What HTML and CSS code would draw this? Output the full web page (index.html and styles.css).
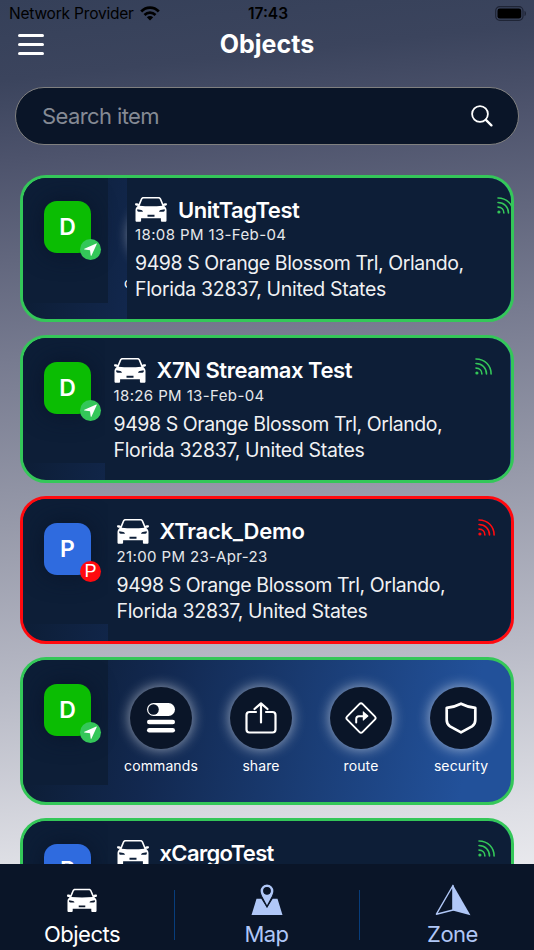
FILE: index.html
```html
<!DOCTYPE html>
<html lang="en">
<head>
    <meta charset="UTF-8">
    <meta name="viewport" content="width=device-width, initial-scale=1.0">
    <title>Objects</title>
    <link rel="stylesheet" href="styles.css">
</head>
<body>
    <svg class="sprite" width="0" height="0">
        <symbol id="car" viewBox="0 0 32 25">
            <path fill="currentColor" fill-rule="evenodd" d="M8.5 0h15c1.2 0 2.2.6 2.7 1.7L28.4 7c.3-.6.8-.8 1.5-.8h1.2c.6 0 .9.4.9.9 0 1-.7 1.7-1.6 1.7h-1.2l1.5 1.7c.6.8.8 1.500.8 2.500v10.500c0 .8-.5 1.300-1.300 1.300h-3c-.8 0-1.300-.5-1.300-1.300v-2.200H6.100v2.200c0 .8-.5 1.300-1.300 1.300h-3C1 24.800.5 24.300.5 23.500V13c0-1 .2-1.700.8-2.500l1.500-1.700H1.600C.7 8.800 0 8.100 0 7.100c0-.5.3-.9.9-.9h1.200c.7 0 1.200.2 1.500.8l2.200-5.300C6.300.6 7.300 0 8.500 0zM8.600 1.600c-.7 0-1.100.3-1.400 1L4.700 8.700c7 .7 15.600.7 22.600 0l-2.500-6.100c-.3-.7-.7-1-1.400-1zM2.300 12.300c-.4 1.500.2 2.400 1.500 2.400h4.100c0-1-.6-1.500-1.600-1.800zM29.700 12.300c.4 1.500-.2 2.400-1.500 2.400h-4.100c0-1 .6-1.500 1.600-1.800zM12.500 17.800v1.900h7v-1.900z"/>
        </symbol>
        <symbol id="signal" viewBox="0 0 17 17">
            <circle cx="1.900" cy="15" r="1.600" fill="currentColor"/>
            <path fill="none" stroke="currentColor" stroke-width="1.600" stroke-linecap="round" d="M1 10.100c3.500 0 5.900 2.400 5.900 5.900M1 5.500c6 0 10.500 4.500 10.500 10.500M1 1c8.700 0 15.100 6.400 15.100 15"/>
        </symbol>
        <symbol id="arrow" viewBox="0 0 21 21">
            <path fill="#fff" d="M16.300 4.500 4.400 9.700c-.5.200-.4.700.1.800l5.500.8.700 5.200c.1.500.6.600.8.100l5.300-11.500c.2-.4-.1-.8-.5-.6z"/>
        </symbol>
        <symbol id="commands" viewBox="0 0 30 31">
            <rect x="1" y="1" width="28" height="13" rx="6.500" fill="#fff"/>
            <circle cx="7.500" cy="7.500" r="5.300" fill="#0a1528"/>
            <rect x="1" y="17.700" width="28" height="4.600" rx="2.300" fill="#fff"/>
            <rect x="1" y="26" width="28" height="4.600" rx="2.300" fill="#fff"/>
        </symbol>
        <symbol id="share" viewBox="0 0 32 32">
            <path fill="none" stroke="#fff" stroke-width="2.200" stroke-linecap="round" stroke-linejoin="round" d="M11 10H4.500C2.500 10 1.500 11 1.500 13v14.500c0 2 1 3 3 3h23c2 0 3-1 3-3V13c0-2-1-3-3-3H21M16 20.500V1.500M9.500 7 16 1.300 22.500 7"/>
        </symbol>
        <symbol id="route" viewBox="0 0 32 32">
            <path fill="none" stroke="#fff" stroke-width="1.900" stroke-linejoin="round" d="M14.300 2.200 2.200 14.300c-1.200 1.200-1.200 2.200 0 3.400l12.100 12.100c1.200 1.200 2.200 1.200 3.400 0l12.100-12.100c1.200-1.200 1.200-2.200 0-3.400L17.700 2.200c-1.200-1.200-2.200-1.200-3.400 0z"/>
            <path fill="none" stroke="#fff" stroke-width="2" stroke-linecap="round" d="M11.200 20.500V17c0-1.800 1-2.800 2.800-2.800h5"/>
            <path fill="#fff" d="M17.800 9.700v8.600c0 .5.400.6.700.3l4.700-4c.4-.3.400-.8 0-1.200l-4.700-4c-.3-.3-.7-.1-.7.300z"/>
        </symbol>
        <symbol id="shield" viewBox="0 0 32 32">
            <path fill="none" stroke="#fff" stroke-width="2.700" stroke-linejoin="round" d="M16 1.700c-4.500 2.300-9.500 3.700-14.300 4.200V18c0 3 1 4.900 3.300 6.400L16 30.400l11-6c2.300-1.500 3.300-3.400 3.300-6.400V5.900C25.500 5.400 20.500 4 16 1.700z"/>
        </symbol>
    </svg>

    <div class="status-bar">
        <div class="carrier">
            <span>Network Provider</span>
            <svg width="20" height="15" viewBox="0 0 20 15">
                <path fill="none" stroke="#000" stroke-width="2.700" d="M1.200 5.500c5-5.100 12.600-5.100 17.600 0M4.500 9c3.200-3.100 7.800-3.100 11 0"/>
                <path d="M10 14.500 6.800 11.300c1.900-1.700 4.500-1.700 6.400 0z"/>
            </svg>
        </div>
        <span class="clock">17:43</span>
        <svg class="battery" width="32" height="15" viewBox="0 0 32 15">
            <rect x=".7" y=".7" width="27.300" height="13.600" rx="4" fill="none" stroke="#1f2536" stroke-width="1.200"/>
            <rect x="2.500" y="2.500" width="23.700" height="10" rx="2.300"/>
            <path fill="#1f2536" d="M29.500 5c2 .6 2 4.400 0 5z"/>
        </svg>
    </div>

    <header class="header">
        <div class="menu"><i></i><i></i><i></i></div>
        <h1>Objects</h1>
    </header>

    <div class="search">
        <span>Search item</span>
        <svg width="22" height="22" viewBox="0 0 22 22" fill="none" stroke="#fff" stroke-linecap="round">
            <circle cx="9" cy="9" r="7.900" stroke-width="1.800"/>
            <path stroke-width="2.300" d="m14.900 14.900 5.500 5.500"/>
        </svg>
    </div>

    <main class="list">
        <div class="card">
            <div class="actions">
                <div class="action"><span class="circle"><svg width="30" height="31"><use href="#commands"/></svg></span>commands</div>
            </div>
            <div class="side">
                <div class="avatar green">D<span class="badge"><svg width="21" height="21"><use href="#arrow"/></svg></span></div>
            </div>
            <div class="panel swiped">
                <div class="name"><svg width="32" height="25"><use href="#car"/></svg><h2>UnitTagTest</h2></div>
                <p class="time">18:08 PM 13-Feb-04</p>
                <p class="address">9498 S Orange Blossom Trl, Orlando,<br>Florida 32837, United States</p>
                <svg class="signal" width="17" height="17"><use href="#signal"/></svg>
            </div>
        </div>

        <div class="card">
            <div class="side">
                <div class="avatar green">D<span class="badge"><svg width="21" height="21"><use href="#arrow"/></svg></span></div>
            </div>
            <div class="panel near">
                <div class="name"><svg width="32" height="25"><use href="#car"/></svg><h2>X7N Streamax Test</h2></div>
                <p class="time">18:26 PM 13-Feb-04</p>
                <p class="address">9498 S Orange Blossom Trl, Orlando,<br>Florida 32837, United States</p>
                <svg class="signal" width="17" height="17"><use href="#signal"/></svg>
            </div>
        </div>

        <div class="card offline">
            <div class="side">
                <div class="avatar blue">P<span class="badge parked">P</span></div>
            </div>
            <div class="panel">
                <div class="name"><svg width="32" height="25"><use href="#car"/></svg><h2 class="wide">XTrack_Demo</h2></div>
                <p class="time">21:00 PM 23-Apr-23</p>
                <p class="address">9498 S Orange Blossom Trl, Orlando,<br>Florida 32837, United States</p>
                <svg class="signal" width="17" height="17"><use href="#signal"/></svg>
            </div>
        </div>

        <div class="card">
            <div class="actions">
                <div class="action"><span class="circle"><svg width="30" height="31"><use href="#commands"/></svg></span>commands</div>
                <div class="action"><span class="circle"><svg width="32" height="32"><use href="#share"/></svg></span>share</div>
                <div class="action"><span class="circle"><svg width="32" height="32"><use href="#route"/></svg></span>route</div>
                <div class="action"><span class="circle"><svg width="32" height="32"><use href="#shield"/></svg></span>security</div>
            </div>
            <div class="side">
                <div class="avatar green">D<span class="badge"><svg width="21" height="21"><use href="#arrow"/></svg></span></div>
            </div>
        </div>

        <div class="card">
            <div class="side">
                <div class="avatar blue">P</div>
            </div>
            <div class="panel">
                <div class="name"><svg width="32" height="25"><use href="#car"/></svg><h2 class="tight">xCargoTest</h2></div>
                <svg class="signal" width="17" height="17"><use href="#signal"/></svg>
            </div>
        </div>
    </main>

    <nav class="tabs">
        <a class="tab active">
            <svg width="30" height="25"><use href="#car"/></svg>
            <span>Objects</span>
        </a>
        <a class="tab">
            <svg width="32" height="32" viewBox="0 0 32 32">
                <path fill="currentColor" d="M5.500 14.800h4.800l5.700 9.200 5.700-9.200h4.800L31.500 31H.5z"/>
                <path fill="currentColor" stroke="#0a1528" stroke-width="1.200" fill-rule="evenodd" d="M16 0c-4 0-7 3-7 6.900 0 2 .6 3.600 1.500 5.400L16 22.600l5.500-10.300c.9-1.800 1.500-3.400 1.500-5.400C23 3 20 0 16 0zm0 3.600a3.300 3.300 0 1 1 0 6.600 3.300 3.300 0 0 1 0-6.600z"/>
            </svg>
            <span>Map</span>
        </a>
        <a class="tab">
            <svg width="36" height="32" viewBox="0 0 36 32">
                <path fill="none" stroke="currentColor" stroke-width="1.400" stroke-linejoin="round" d="M18 1.500 1.400 30.200 18 26z"/>
                <path fill="currentColor" d="M17.600.3 35.500 31.300 17.600 26.500z"/>
            </svg>
            <span>Zone</span>
        </a>
    </nav>
</body>
</html>
```
FILE: styles.css
```css
* {
    box-sizing: border-box;
}
body {
    margin: 0;
    height: 950px;
    overflow: hidden;
    display: flex;
    flex-direction: column;
    font-family: Inter, 'Liberation Sans', sans-serif;
    color: #fff;
    background: linear-gradient(174deg, #354059 0%, #3b445d 8%, #4d536c 16%, #777b90 36%, #9699a9 52%, #b8bac6 69%, #dedfe5 86%, #ebebef 93%);
}
svg {
    display: block;
}
.sprite {
    position: absolute;
}
h1, h2, p {
    margin: 0;
}
.status-bar {
    display: grid;
    grid-template-columns: 1fr auto 1fr;
    align-items: center;
    height: 27px;
    padding: 0 7px 0 9px;
    color: #000;
    font-size: 15.5px;
}
.carrier {
    display: flex;
    align-items: center;
    gap: 6px;
    letter-spacing: -0.2px;
}
.clock {
    font-weight: 600;
}
.battery {
    justify-self: end;
}
.header {
    display: grid;
    grid-template-columns: 60px 1fr 60px;
    align-items: center;
    height: 34px;
}
.menu {
    display: grid;
    gap: 6px;
    width: 26px;
    margin-left: 18px;
}
.menu i {
    height: 3px;
    border-radius: 2px;
    background: #fff;
}
.header h1 {
    font-size: 25px;
    font-weight: 700;
    letter-spacing: 0;
    text-align: center;
}
.search {
    display: flex;
    align-items: center;
    justify-content: space-between;
    flex: none;
    height: 58px;
    margin: 26px 15px 0;
    padding: 0 25px 0 26px;
    border: 1px solid #808080;
    border-radius: 29px;
    background: #0a1528;
    color: #858a94;
    font-size: 22px;
    letter-spacing: -0.6px;
}
.list {
    display: flex;
    flex-direction: column;
    flex: 1;
    gap: 13.3px;
    min-height: 0;
    padding: 29.7px 20px 0;
    overflow: hidden;
}
.card {
    display: grid;
    grid-template-areas: "all";
    grid-template-columns: 100%;
    flex: none;
    height: 147.5px;
    border: 3px solid #34c759;
    border-radius: 26px;
    background: linear-gradient(100deg, #0d1e37 5%, #12284f 27%, #22519a 90%);
    overflow: hidden;
}
.card.offline {
    border-color: #ff0a0f;
}
.side, .panel, .actions {
    grid-area: all;
}
.side {
    width: 85px;
    height: 125px;
    padding: 23.6px 0 0 21px;
    background: #0d1e37;
}
.avatar {
    position: relative;
    display: grid;
    place-items: center;
    width: 47px;
    height: 52px;
    border-radius: 13px;
    font-size: 23px;
    font-weight: 600;
    box-shadow: 0 0 24px #09152a;
}
.green {
    background: #0bbd03;
}
.blue {
    background: #2f6bdf;
}
.badge {
    position: absolute;
    right: -10px;
    bottom: -7px;
    width: 21px;
    height: 21px;
    border-radius: 50%;
    background: #34c759;
}
.badge.parked {
    background: #ff0a0f;
    font-family: 'Liberation Sans', sans-serif;
    font-size: 18px;
    font-weight: 400;
    line-height: 21px;
    text-align: center;
}
.panel {
    position: relative;
    width: 405px;
    margin-left: 85px;
    padding: 19px 0 0 8.5px;
    background: #0d1e37;
}
.panel.near {
    margin-left: 82px;
}
.panel.swiped {
    margin-left: 104px;
    padding-left: 8px;
}
.name {
    display: flex;
    align-items: center;
    gap: 11px;
    height: 26px;
}
.name h2 {
    font-size: 22px;
    font-weight: 600;
    letter-spacing: -0.45px;
    line-height: 26px;
}
.name .wide {
    letter-spacing: -0.25px;
}
.name .tight {
    letter-spacing: -0.65px;
}
.time {
    margin-top: 1.5px;
    font-size: 15px;
    letter-spacing: 0.38px;
    line-height: 21px;
    color: #e6e8eb;
}
.address {
    margin-top: 5px;
    font-size: 19.5px;
    letter-spacing: -0.32px;
    line-height: 26px;
    color: #f0f1f3;
    white-space: nowrap;
}
.address::first-line {
    letter-spacing: -0.43px;
}
.signal {
    position: absolute;
    top: 19.5px;
    left: 370px;
    color: #34c759;
}
.offline .signal {
    color: #ff0a0f;
}
.actions {
    display: flex;
    gap: 38px;
    padding: 26.5px 0 0 107px;
}
.action {
    display: flex;
    flex-direction: column;
    align-items: center;
    flex: none;
    width: 62px;
    font-size: 14px;
    letter-spacing: 0.1px;
    line-height: 20px;
}
.circle {
    display: grid;
    place-items: center;
    width: 62px;
    height: 62px;
    margin-bottom: 7px;
    border-radius: 50%;
    background: #0a1528;
    box-shadow: 0 0 14px rgba(255, 255, 255, 0.6);
}
.tabs {
    display: grid;
    grid-template-columns: 174px 185px 175px;
    flex: none;
    height: 86px;
    background: #0a1528;
    color: #b0c7f7;
}
.tab {
    position: relative;
    display: flex;
    flex-direction: column;
    align-items: center;
    justify-content: flex-end;
    gap: 4px;
    padding-bottom: 1px;
    font-size: 22px;
    letter-spacing: -0.5px;
    line-height: 29px;
}
.tab + .tab::before {
    content: "";
    position: absolute;
    top: 26px;
    left: 0;
    width: 1px;
    height: 50px;
    background: #073d7c;
}
.tab.active {
    color: #fff;
    gap: 7px;
    padding-right: 10px;
}
.tab:last-child {
    padding-left: 12px;
}
```
